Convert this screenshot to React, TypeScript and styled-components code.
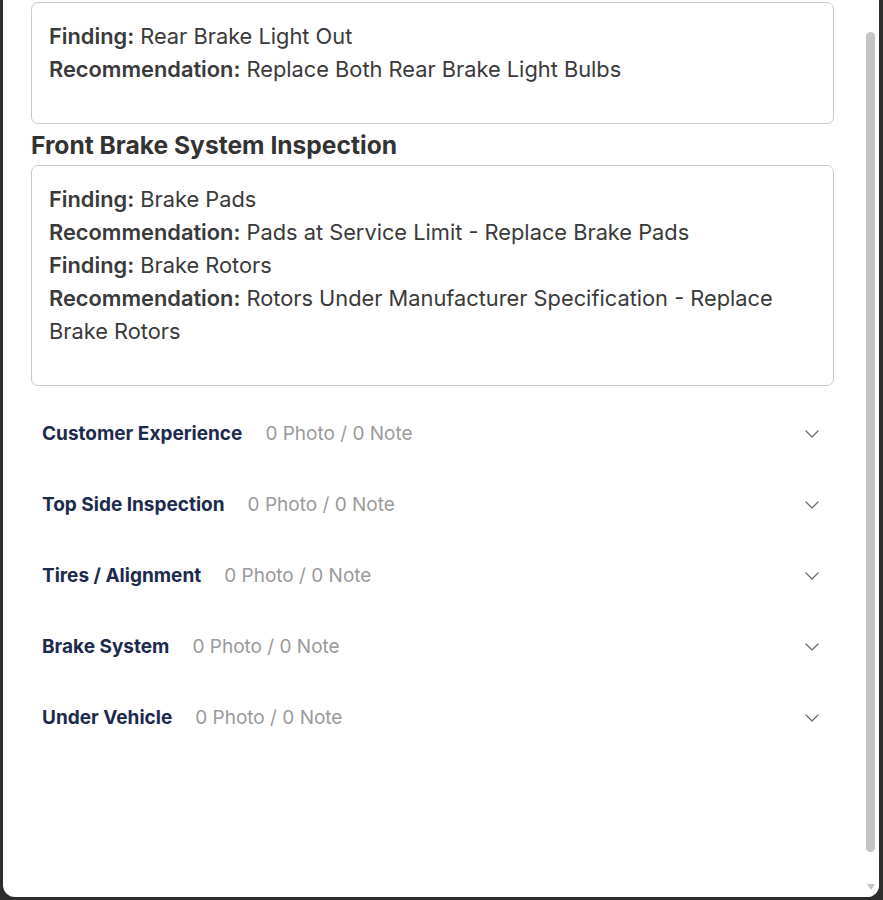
import React, { useCallback, useLayoutEffect, useRef, useState } from 'react';
import styled, { createGlobalStyle } from 'styled-components';

const GlobalStyle = createGlobalStyle`
  html, body {
    margin: 0;
    height: 100%;
    overflow: hidden;
    background: #2d2d2d;
    font-family: Inter, "Noto Sans", sans-serif;
  }
  #root {
    height: 100%;
  }
`;

const Backdrop = styled.div`
  height: 100vh;
  box-sizing: border-box;
  display: flex;
  flex-direction: column;
  justify-content: flex-end;
  padding: 0 4px 3px 3px;
`;

const Modal = styled.div`
  position: relative;
  flex-shrink: 0;
  height: 960px;
  background: #ffffff;
  border-radius: 12px;
  overflow: hidden;
`;

const Scroller = styled.div`
  height: 100%;
  overflow-y: auto;
  scrollbar-width: none;
  &::-webkit-scrollbar {
    display: none;
  }
`;

/* drawn scrollbar, sits over the right edge of the modal */
const Rail = styled.div`
  position: absolute;
  top: 0;
  right: 0;
  bottom: 0;
  width: 15px;
  display: flex;
  flex-direction: column;
  background: #ffffff;
`;

const RailButton = styled.div`
  height: 17px;
  display: flex;
  align-items: center;
  justify-content: center;
  padding-right: 2px;
`;

const Arrow = styled.span<{ $up?: boolean }>`
  width: 0;
  height: 0;
  border-left: 4.5px solid transparent;
  border-right: 4.5px solid transparent;
  ${(p) => (p.$up ? 'border-bottom' : 'border-top')}: 6px solid #c4c4c4;
  margin-top: ${(p) => (p.$up ? '0' : '-3px')};
`;

const Track = styled.div`
  position: relative;
  flex: 1;
`;

const Thumb = styled.div`
  position: absolute;
  left: 2px;
  width: 9px;
  border-radius: 5px;
  background: #c4c4c4;
`;

const Content = styled.div`
  padding: 24px 45px 177px 28px;
`;

const ModalHeader = styled.div`
  display: flex;
  align-items: center;
  justify-content: space-between;
  height: 56px;
  margin-bottom: 38px;
`;

const ModalTitle = styled.h2`
  margin: 0;
  font-size: 24px;
  font-weight: 700;
  color: #1c2a4e;
`;

const CloseButton = styled.button`
  border: none;
  background: none;
  font-size: 28px;
  color: #6b6b78;
  cursor: pointer;
`;

const SectionTitle = styled.h3`
  margin: 3px 0 2px;
  font-size: 24.6px;
  line-height: 36px;
  font-weight: 700;
  color: #333333;
`;

const NoteCard = styled.div`
  border: 1.5px solid #c9c9c9;
  border-radius: 7px;
  padding: 17px 17px 37px;
  font-size: 21.8px;
  line-height: 33px;
  color: #3a3a3a;
`;

const Label = styled.span`
  font-weight: 600;
`;

const Line = styled.div``;

const AccordionList = styled.div`
  margin-top: 12px;
`;

const AccordionRow = styled.div`
  height: 71px;
  display: flex;
  align-items: center;
  padding: 0 15px 0 11px;
  cursor: pointer;
`;

const RowTitle = styled.span`
  font-size: 19px;
  font-weight: 700;
  color: #1c2a4e;
`;

const RowMeta = styled.span`
  margin-left: 23px;
  font-size: 19px;
  color: #9a9a9a;
`;

const Chevron = styled.svg`
  margin-left: auto;
`;

type Entry = { label: string; text: string };

const rearLight: Entry[] = [
  { label: 'Finding:', text: 'Rear Brake Light Out' },
  { label: 'Recommendation:', text: 'Replace Both Rear Brake Light Bulbs' },
];

const frontBrake: Entry[] = [
  { label: 'Finding:', text: 'Brake Pads' },
  { label: 'Recommendation:', text: 'Pads at Service Limit - Replace Brake Pads' },
  { label: 'Finding:', text: 'Brake Rotors' },
  {
    label: 'Recommendation:',
    text: 'Rotors Under Manufacturer Specification - Replace Brake Rotors',
  },
];

const sections = [
  'Customer Experience',
  'Top Side Inspection',
  'Tires / Alignment',
  'Brake System',
  'Under Vehicle',
];

const Notes: React.FC<{ entries: Entry[]; cardRef?: React.Ref<HTMLDivElement> }> = ({
  entries,
  cardRef,
}) => (
  <NoteCard ref={cardRef}>
    {entries.map((e, i) => (
      <Line key={i}>
        <Label>{e.label}</Label> {e.text}
      </Line>
    ))}
  </NoteCard>
);

export default function App() {
  const scrollRef = useRef<HTMLDivElement>(null);
  const trackRef = useRef<HTMLDivElement>(null);
  const firstCardRef = useRef<HTMLDivElement>(null);
  const [thumb, setThumb] = useState({ top: 0, height: 0 });

  const syncThumb = useCallback(() => {
    const el = scrollRef.current;
    const track = trackRef.current;
    if (!el || !track) return;
    const len = track.clientHeight;
    setThumb({
      top: (el.scrollTop / el.scrollHeight) * len,
      height: (el.clientHeight / el.scrollHeight) * len,
    });
  }, []);

  // open the modal scrolled down to the first note card
  useLayoutEffect(() => {
    const el = scrollRef.current;
    const card = firstCardRef.current;
    if (!el || !card) return;
    el.scrollTop += card.getBoundingClientRect().top - 2;
    syncThumb();
  }, [syncThumb]);

  return (
    <>
      <GlobalStyle />
      <Backdrop>
        <Modal>
          <Scroller ref={scrollRef} onScroll={syncThumb}>
            <Content>
              <ModalHeader>
                <ModalTitle>Inspection Results</ModalTitle>
                <CloseButton>×</CloseButton>
              </ModalHeader>
              <SectionTitle>Rear Lighting Inspection</SectionTitle>
              <Notes entries={rearLight} cardRef={firstCardRef} />
              <SectionTitle>Front Brake System Inspection</SectionTitle>
              <Notes entries={frontBrake} />
              <AccordionList>
                {sections.map((s) => (
                  <AccordionRow key={s}>
                    <RowTitle>{s}</RowTitle>
                    <RowMeta>0 Photo / 0 Note</RowMeta>
                    <Chevron width="14" height="8" viewBox="0 0 14 8" fill="none">
                      <polyline
                        points="1,1 7,7 13,1"
                        stroke="#6b6b78"
                        strokeWidth="1.3"
                        strokeLinecap="round"
                        strokeLinejoin="round"
                      />
                    </Chevron>
                  </AccordionRow>
                ))}
              </AccordionList>
            </Content>
          </Scroller>
          <Rail>
            <RailButton>
              <Arrow $up />
            </RailButton>
            <Track ref={trackRef}>
              <Thumb style={{ top: thumb.top, height: thumb.height }} />
            </Track>
            <RailButton>
              <Arrow />
            </RailButton>
          </Rail>
        </Modal>
      </Backdrop>
    </>
  );
}
